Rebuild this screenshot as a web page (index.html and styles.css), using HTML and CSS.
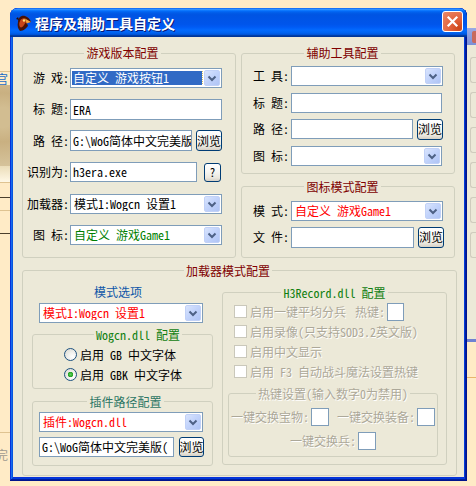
FILE: index.html
```html
<!DOCTYPE html>
<html>
<head>
<meta charset="utf-8">
<title>程序及辅助工具自定义</title>
<link rel="stylesheet" href="styles.css">
</head>
<body>
<div class="bg-left">
  <div class="bl-sp h71"></div>
  <div class="bl-line tan"></div>
  <div class="bl-text blue">宫</div>
  <div class="bl-parch"></div>
  <div class="bl-fade"></div>
  <div class="bl-line tan"></div>
  <div class="bl-sp h14"></div>
  <div class="bl-line dark"></div>
  <div class="bl-sp h12"></div>
  <div class="bl-line tan"></div>
  <div class="bl-sp h22"></div>
  <div class="bl-line dark"></div>
  <div class="bl-sp h198"></div>
  <div class="bl-line tan"></div>
  <div class="bl-sp h15"></div>
  <div class="bl-text gray">完</div>
</div>
<div class="bg-right">
  <div class="br-panel">
    <div class="br-head"><span class="br-red"></span></div>
    <div class="br-body">
      <div class="br-box"></div>
      <div class="br-box"></div>
      <div class="br-box"></div>
      <div class="br-box"></div>
      <div class="br-box"></div>
      <div class="br-box"></div>
    </div>
  </div>
  <div class="br-line"></div>
</div>

<div class="win">
  <div class="titlebar">
    <svg class="ticon" width="17" height="18" viewBox="0 0 17 18">
      <path d="M3 8 C3 4 6 1 10 2 C13 3 15 5 16 8 L12 9 L13 12 C11 14 9 17 5 17 C3 15 2 12 3 8Z" fill="#4a1206"/>
      <path d="M5 7 C6 5 8 4 10 4.5 L11 8 L9 11 C8 13 6 14 5 13 C4 11 4 9 5 7Z" fill="#c8461a"/>
      <path d="M10 4.5 L16 8 L11.5 9.5 Z" fill="#f3a23a"/>
      <circle cx="9" cy="6.5" r="1.2" fill="#ffe27a"/>
      <path d="M1 5 L4 6 L3 3 Z" fill="#2a0a03"/>
    </svg>
    <span class="ttext">程序及辅助工具自定义</span>
    <div class="close">
      <svg width="19" height="19" viewBox="0 0 19 19"><path d="M5.5 5.5L13.5 13.5M13.5 5.5L5.5 13.5" stroke="#fff" stroke-width="2.2" stroke-linecap="square"/></svg>
    </div>
  </div>
  <div class="client">
    <div class="toprow">
      <fieldset class="grp g1">
        <legend>游戏版本配置</legend>
        <div class="rows r1">
          <div class="frow"><span class="lbl">游 戏:</span>
            <div class="combo w152 selc"><span class="val"><span class="sel">自定义 游戏按钮1</span></span><span class="dd"><svg width="14" height="14" viewBox="0 0 14 14"><path d="M3.5 5.5L7 9L10.5 5.5" fill="none" stroke="#4d6185" stroke-width="2"/></svg></span></div>
          </div>
          <div class="frow"><span class="lbl">标 题:</span><div class="inp w152">ERA</div></div>
          <div class="frow"><span class="lbl">路 径:</span><div class="inp w122">G:\WoG简体中文完美版</div><button class="btn w26 ml4">浏览</button></div>
          <div class="frow"><span class="lbl">识别为:</span><div class="inp w127 h20">h3era.exe</div><button class="btn q">?</button></div>
          <div class="frow"><span class="lbl">加载器:</span>
            <div class="combo w152"><span class="val">模式1:Wogcn 设置1</span><span class="dd"><svg width="14" height="14" viewBox="0 0 14 14"><path d="M3.5 5.5L7 9L10.5 5.5" fill="none" stroke="#4d6185" stroke-width="2"/></svg></span></div>
          </div>
          <div class="frow"><span class="lbl">图 标:</span>
            <div class="combo w152"><span class="val green">自定义 游戏Game1</span><span class="dd"><svg width="14" height="14" viewBox="0 0 14 14"><path d="M3.5 5.5L7 9L10.5 5.5" fill="none" stroke="#4d6185" stroke-width="2"/></svg></span></div>
          </div>
        </div>
      </fieldset>
      <div class="col2">
        <fieldset class="grp g2">
          <legend>辅助工具配置</legend>
          <div class="rows r2">
            <div class="frow h20"><span class="lbl l2">工 具:</span>
              <div class="combo w152"><span class="val"></span><span class="dd"><svg width="14" height="14" viewBox="0 0 14 14"><path d="M3.5 5.5L7 9L10.5 5.5" fill="none" stroke="#4d6185" stroke-width="2"/></svg></span></div>
            </div>
            <div class="frow h20"><span class="lbl l2">标 题:</span><div class="inp w151"></div></div>
            <div class="frow h20"><span class="lbl l2">路 径:</span><div class="inp w122"></div><button class="btn w26 ml4">浏览</button></div>
            <div class="frow h20"><span class="lbl l2">图 标:</span>
              <div class="combo w151"><span class="val"></span><span class="dd"><svg width="14" height="14" viewBox="0 0 14 14"><path d="M3.5 5.5L7 9L10.5 5.5" fill="none" stroke="#4d6185" stroke-width="2"/></svg></span></div>
            </div>
          </div>
        </fieldset>
        <fieldset class="grp g3">
          <legend>图标模式配置</legend>
          <div class="rows r3">
            <div class="frow h20"><span class="lbl l2">模 式:</span>
              <div class="combo w152"><span class="val red">自定义 游戏Game1</span><span class="dd"><svg width="14" height="14" viewBox="0 0 14 14"><path d="M3.5 5.5L7 9L10.5 5.5" fill="none" stroke="#4d6185" stroke-width="2"/></svg></span></div>
            </div>
            <div class="frow"><span class="lbl l2">文 件:</span><div class="inp w123"></div><button class="btn w26 ml4">浏览</button></div>
          </div>
        </fieldset>
      </div>
    </div>

    <fieldset class="grp g4">
      <legend class="lg4">加载器模式配置</legend>
      <div class="cols">
        <div class="colL">
          <div class="cap">模式选项</div>
          <div class="combo w164 ml7 mt4"><span class="val red">模式1:Wogcn 设置1</span><span class="dd"><svg width="14" height="14" viewBox="0 0 14 14"><path d="M3.5 5.5L7 9L10.5 5.5" fill="none" stroke="#4d6185" stroke-width="2"/></svg></span></div>
          <fieldset class="sub s1">
            <legend class="lgreen">Wogcn.dll 配置</legend>
            <div class="rrow"><span class="radio"></span><span>启用 GB 中文字体</span></div>
            <div class="rrow"><span class="radio on"></span><span>启用 GBK 中文字体</span></div>
          </fieldset>
          <fieldset class="sub s2">
            <legend class="lteal">插件路径配置</legend>
            <div class="combo w164"><span class="val red">插件:Wogcn.dll</span><span class="dd"><svg width="14" height="14" viewBox="0 0 14 14"><path d="M3.5 5.5L7 9L10.5 5.5" fill="none" stroke="#4d6185" stroke-width="2"/></svg></span></div>
            <div class="frow h20 mt5"><div class="inp w135 h20">G:\WoG简体中文完美版(</div><button class="btn w25 h20 ml5">浏览</button></div>
          </fieldset>
        </div>
        <div class="colR">
          <fieldset class="sub s3">
            <legend class="lgreen">H3Record.dll 配置</legend>
            <div class="ck-row"><span class="cb"></span><span class="dis">启用一键平均分兵</span><span class="dis hk">热键:</span><span class="inp sm"></span></div>
            <div class="ck-row"><span class="cb"></span><span class="dis">启用录像(只支持SOD3.2英文版)</span></div>
            <div class="ck-row"><span class="cb"></span><span class="dis">启用中文显示</span></div>
            <div class="ck-row"><span class="cb"></span><span class="dis">启用 F3 自动战斗魔法设置热键</span></div>
            <fieldset class="sub s4">
              <legend class="ldis">热键设置(输入数字0为禁用)</legend>
              <div class="hk-row"><span class="dis">一键交换宝物:</span><span class="inp sm2"></span><span class="dis ml8">一键交换装备:</span><span class="inp sm2"></span></div>
              <div class="hk-row mt6"><span class="dis">一键交换兵:</span><span class="inp sm2"></span></div>
            </fieldset>
          </fieldset>
        </div>
      </div>
    </fieldset>
  </div>
</div>
</body>
</html>
```

FILE: styles.css
```css
* { box-sizing: border-box; }
html, body { margin: 0; padding: 0; }
body {
  width: 476px; height: 486px; overflow: hidden; position: relative;
  background: #ffebc6;
  font-family: "Noto Sans Mono CJK SC", "Noto Sans CJK SC", sans-serif;
  font-size: 12px; line-height: 14px; color: #000;
}

/* background desktop */
.bg-left { position: absolute; left: 0; top: 0; width: 10px; height: 486px; overflow: hidden; display: flex; flex-direction: column; }
.bl-sp { flex: none; }
.h71 { height: 71px; } .h14 { height: 14px; } .h12 { height: 12px; } .h22 { height: 22px; } .h198 { height: 198px; } .h15 { height: 15px; }
.bl-line { height: 1px; flex: none; }
.bl-line.tan { background: #dfc391; }
.bl-line.dark { background: #4b3f2c; }
.bl-text { height: 13px; line-height: 13px; margin-left: -4px; font-size: 12px; flex: none; }
.bl-text.blue { color: #1a6cc6; }
.bl-text.gray { color: #a09a90; }
.bl-parch { height: 81px; flex: none; background: radial-gradient(circle at 30% 40%, #d2bd91 0 20%, #c9b081 50%, #d6c39b 100%); }
.bl-fade { height: 16px; flex: none; background: linear-gradient(#ebddb9, #fff8e6); }

.bg-right { position: absolute; left: 467px; top: 0; width: 9px; height: 486px; overflow: hidden; display: flex; flex-direction: column; padding-top: 28px; }
.br-panel { height: 314px; flex: none; background: #ece9d8; display: flex; flex-direction: column; }
.br-head { height: 17px; flex: none; background: linear-gradient(#9aaae4, #7b90d8); display: flex; justify-content: flex-end; align-items: center; }
.br-red { width: 4px; height: 12px; background: #c86a5e; border-radius: 2px 0 0 2px; }
.br-body { flex: 1; display: flex; flex-direction: column; padding: 12px 0 0 3px; gap: 9px; border-bottom: 3px solid #6f82d2; }
.br-box { height: 26px; flex: none; border: 1px solid #cfccbd; border-right: none; border-radius: 3px 0 0 3px; }
.br-line { margin-top: 35px; height: 1px; background: #e8b56c; }

/* window */
.win {
  position: absolute; left: 10px; top: 8px; width: 457px; height: 473px;
  border-radius: 8px 8px 0 0;
  background: #0831d9;
  box-shadow: inset -1px -1px #00138c, inset 1px 1px #0831d9, inset -2px -2px #001ea0, inset 2px 2px #166aee, inset -3px -3px #003bda, inset 3px 3px #0855dd;
  display: flex; flex-direction: column; overflow: hidden;
}
.titlebar {
  height: 29px; flex: none; display: flex; align-items: center; padding: 0 4px 0 5px;
  border-radius: 8px 8px 0 0;
  background: linear-gradient(to bottom, #0058ee 0%, #3a93ff 4%, #288eff 6%, #127dff 8%, #036ffc 10%, #0262ee 14%, #0057e5 20%, #0054e3 24%, #0055eb 56%, #005bf5 66%, #026afe 76%, #0062ef 86%, #0052d6 92%, #0040ab 94%, #003092 100%);
}
.ticon { flex: none; margin-top: 1px; }
.ttext {
  margin-left: 3px; color: #fff; font-weight: bold; font-size: 14px; line-height: 16px;
  font-family: "Noto Sans CJK SC", sans-serif;
  text-shadow: 1px 1px 0 #0a1874;
}
.close {
  margin-left: auto; width: 21px; height: 21px; border: 1px solid #fff; border-radius: 3px;
  background: radial-gradient(circle at 85% 85%, #cc4619 0%, #e2613b 40%, #e88a6b 100%);
  display: flex; align-items: center; justify-content: center; margin-top: -3px;
}
.client {
  flex: 1; margin: 0 3px 4px 3px; background: #ece9d8;
  padding: 9px 7px 0 9px; display: flex; flex-direction: column;
}

/* group boxes */
fieldset { margin: 0; padding: 0; border: 1px solid #d0d0bf; border-radius: 3px; min-width: 0; }
legend {
  margin: 0 auto; padding: 0 2px; height: 14px; line-height: 14px; font-size: 12px;
  color: #800000; font-family: inherit; white-space: pre;
}
.toprow { display: flex; gap: 5px; }
.g1 { width: 214px; padding: 7px 13px 11px 0; }
.col2 { width: 214px; display: flex; flex-direction: column; gap: 6px; }
.g2 { padding: 6px 11px 7px 0; }
.g3 { flex: 1; padding: 7px 11px 0 0; }
.rows { display: flex; flex-direction: column; }
.r1 { gap: 10.6px; }
.r2 { gap: 6.67px; }
.r3 { gap: 6px; }

.frow { display: flex; align-items: center; height: 21px; }
.frow.h20 { height: 20px; }
.lbl { width: 47px; flex: none; text-align: right; padding-right: 1px; white-space: pre; }
.lbl.l2 { width: 49px; padding-right: 2px; }

/* controls */
.combo {
  height: 20px; flex: none; display: flex; align-items: center;
  border: 1px solid #7f9db9; background: #fff; padding: 1px 1px 1px 3px;
}
.combo .val { flex: 1; min-width: 0; overflow: hidden; white-space: pre; height: 14px; }
.combo.selc { padding-left: 1px; }
.sel {
  display: block; background: #316ac5; color: #fff; height: 14px; margin-right: 2px;
  padding-left: 1px; outline: 1px dotted #d8c060; outline-offset: 0;
}
.dd {
  flex: none; width: 16px; height: 16px; border-radius: 2px;
  background: linear-gradient(135deg, #d9e4fd 0%, #c3d4fb 45%, #afc4f5 100%);
  border: 1px solid #c1d1f7;
  display: flex; align-items: center; justify-content: center;
}
.inp {
  height: 21px; flex: none; border: 1px solid #7f9db9; background: #fff;
  padding: 0 0 0 2px; white-space: pre; overflow: hidden; line-height: 19px;
}
.inp.h20 { height: 20px; line-height: 18px; }
.frow.h20 .inp { height: 20px; line-height: 18px; }
.w152 { width: 152px; } .w151 { width: 151px; } .w122 { width: 122px; } .w123 { width: 123px; }
.w127 { width: 127px; } .w164 { width: 164px; } .w135 { width: 135px; }
.btn {
  flex: none; height: 21px; border: 1px solid #003c74; border-radius: 3px; padding: 0; margin: 0;
  background: linear-gradient(#ffffff 0%, #f6f6f3 45%, #ebe8df 80%, #d6d0c5 100%);
  font-family: inherit; font-size: 12px; line-height: 14px; color: #000; white-space: nowrap;
  display: flex; align-items: center; justify-content: center; overflow: visible;
}
.btn.w26 { width: 26px; } .btn.w25 { width: 25px; }
.btn.h20 { height: 20px; }
.btn.q { width: 17px; height: 19px; margin-left: 7px; }
.ml4 { margin-left: 4px; } .ml5 { margin-left: 5px; } .ml7 { margin-left: 7px; } .ml8 { margin-left: 8px; }
.mt4 { margin-top: 4px; } .mt5 { margin-top: 5px; } .mt6 { margin-top: 6px; }

.green { color: #008000; }
.red { color: #ff0000; }

/* loader box */
.g4 { margin-top: 6px; padding: 7px 9px 9px 9px; }
.lg4 { margin: 0 0 0 152px; }
.cols { display: flex; gap: 9px; }
.colL { width: 181px; flex: none; display: flex; flex-direction: column; }
.colR { width: 225px; flex: none; padding-top: 1px; }
.cap { height: 14px; text-align: center; padding-right: 9px; color: #0f57a8; font-family: "Noto Sans CJK SC", sans-serif; }
.sub { border-color: #d0d0bf; }
.lgreen { color: #108010; }
.lteal { color: #2e7765; }
.ldis { color: #aca899; text-shadow: 1px 1px 0 #fff; }
.s1 { margin-top: 5px; padding: 5px 0 5px 31px; display: flex; flex-direction: column; gap: 4px; }
.rrow { height: 16px; display: flex; align-items: center; gap: 3px; white-space: pre; }
.radio {
  width: 13px; height: 13px; border-radius: 50%; border: 1px solid #1c5180; flex: none;
  background: radial-gradient(circle at 70% 70%, #ffffff 0%, #f1f1ee 40%, #d6d5cc 100%);
}
.radio.on { background: radial-gradient(circle at 50% 50%, #5fd05f 0, #21a121 2.5px, transparent 3px), radial-gradient(circle at 70% 70%, #ffffff 0%, #f1f1ee 40%, #d6d5cc 100%); }
.s2 { margin-top: 6px; padding: 3px 0 8px 6px; }

.s3 { padding: 2px 0 7px 0; }
.ck-row { height: 20px; display: flex; align-items: center; padding-left: 11px; white-space: pre; }
.cb { width: 13px; height: 13px; border: 1px solid #cac8bb; background: #fff; flex: none; margin-right: 3px; }
.dis { color: #aca899; text-shadow: 1px 1px 0 #fff; white-space: pre; }
.hk { margin-left: 9px; }
.inp.sm { width: 17px; height: 18px; margin-left: 2px; }
.inp.sm2 { width: 18px; height: 18px; margin-left: 2px; }
.s4 { margin: 5px 0 0 5px; width: 210px; padding: 7px 0 6px 0; }
.hk-row { height: 18px; display: flex; align-items: center; justify-content: center; }
```
